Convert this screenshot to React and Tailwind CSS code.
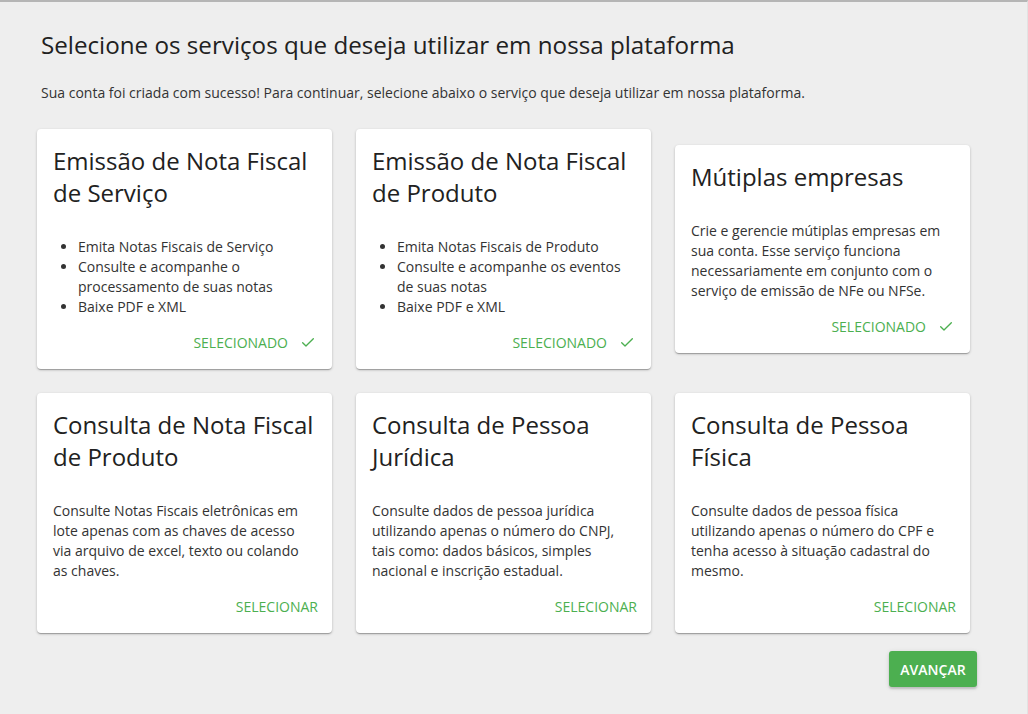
import React from "react";

const font = { fontFamily: '"Open Sans", "Liberation Sans", sans-serif' };

function Check() {
  return (
    <svg width="16" height="16" viewBox="0 0 24 24" fill="none" stroke="#4caf50" strokeWidth="2" strokeLinecap="round" strokeLinejoin="round">
      <path d="M4 13l5 5L20 7" />
    </svg>
  );
}

function Card({ title, children, selected }) {
  return (
    <div className="bg-white rounded-[4px] shadow-[0_1px_3px_rgba(0,0,0,0.2),0_1px_1px_rgba(0,0,0,0.14),0_2px_1px_-1px_rgba(0,0,0,0.12)] flex flex-col">
      <div className="px-4 pt-4">
        <h2 className="text-[24px] leading-[32px] text-[#212121] font-normal">{title}</h2>
        <div className="mt-[28px] text-[14px] leading-[20px] text-[#333]">{children}</div>
      </div>
      <div className="mt-[7px] mb-[9px] h-9 flex items-center justify-end">
        {selected ? (
          <div className="flex items-center gap-[12px] pr-4 text-[14px] text-[#4caf50] uppercase">
            <span>Selecionado</span>
            <Check />
          </div>
        ) : (
          <span className="pr-[14px] text-[14px] text-[#4caf50] uppercase">Selecionar</span>
        )}
      </div>
    </div>
  );
}

function Bullets({ items }) {
  return (
    <ul className="list-disc pl-[25px]">
      {items.map((t) => (
        <li key={t}>{t}</li>
      ))}
    </ul>
  );
}

export default function App() {
  return (
    <div style={font} className="min-h-[714px] w-[1028px] bg-[#eeeeee] border-t-2 border-[#b5b5b5] border-r border-r-[#e2e2e2] text-[#333]">
      <div className="pl-[37px] pt-[27px]">
        <h1 className="pl-1 text-[24.2px] leading-[32px] text-[#212121] font-normal">
          Selecione os serviços que deseja utilizar em nossa plataforma
        </h1>
        <p className="pl-1 mt-[22px] text-[14px] leading-[20px] text-[#333]">
          Sua conta foi criada com sucesso! Para continuar, selecione abaixo o serviço que deseja utilizar em nossa plataforma.
        </p>

        <div className="mt-[26px] w-[933px] grid grid-cols-3 gap-6 items-center">
          <Card title="Emissão de Nota Fiscal de Serviço" selected>
            <Bullets items={["Emita Notas Fiscais de Serviço", "Consulte e acompanhe o processamento de suas notas", "Baixe PDF e XML"]} />
          </Card>
          <Card title="Emissão de Nota Fiscal de Produto" selected>
            <Bullets items={["Emita Notas Fiscais de Produto", "Consulte e acompanhe os eventos de suas notas", "Baixe PDF e XML"]} />
          </Card>
          <Card title="Mútiplas empresas" selected>
            <p>Crie e gerencie mútiplas empresas em sua conta. Esse serviço funciona necessariamente em conjunto com o serviço de emissão de NFe ou NFSe.</p>
          </Card>
          <Card title="Consulta de Nota Fiscal de Produto">
            <p>Consulte Notas Fiscais eletrônicas em lote apenas com as chaves de acesso via arquivo de excel, texto ou colando as chaves.</p>
          </Card>
          <Card title="Consulta de Pessoa Jurídica">
            <p>Consulte dados de pessoa jurídica utilizando apenas o número do CNPJ, tais como: dados básicos, simples nacional e inscrição estadual.</p>
          </Card>
          <Card title="Consulta de Pessoa Física">
            <p>Consulte dados de pessoa física utilizando apenas o número do CPF e tenha acesso à situação cadastral do mesmo.</p>
          </Card>
        </div>

        <div className="w-[940px] flex justify-end mt-[18px]">
          <button className="h-9 w-[88px] rounded-[3px] bg-[#4caf50] text-white text-[14px] font-semibold uppercase shadow-[0_2px_2px_rgba(0,0,0,0.14),0_1px_5px_rgba(0,0,0,0.12)]">
            Avançar
          </button>
        </div>
      </div>
    </div>
  );
}
